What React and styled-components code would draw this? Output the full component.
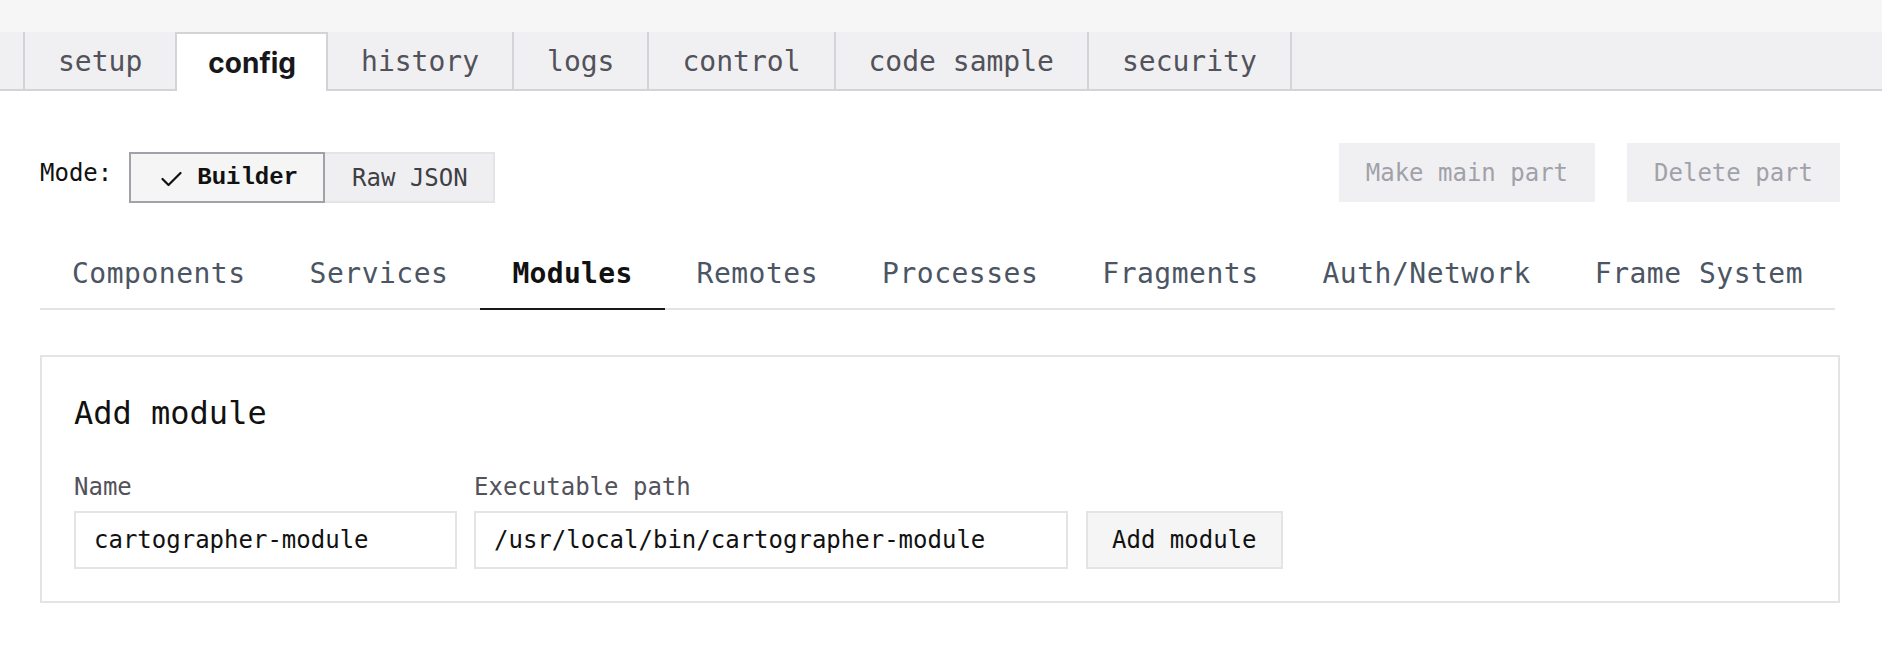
import React from "react";
import styled, { createGlobalStyle, css } from "styled-components";

const GlobalStyle = createGlobalStyle`
  html, body { margin: 0; padding: 0; background: #ffffff; }
  body { font-family: "DejaVu Sans Mono", "Liberation Mono", monospace; color: #111111; }
  * { box-sizing: border-box; }
`;

const Page = styled.div`
  width: 1882px;
  min-height: 648px;
  background: #ffffff;
`;

const TopBand = styled.div`
  height: 32px;
  background: #f6f6f6;
`;

const TabStrip = styled.div`
  display: flex;
  align-items: flex-start;
  height: 59px;
  background: #f0f0f2;
  border-bottom: 2px solid #d4d4d8;
`;

const TabStub = styled.div`
  width: 25px;
  height: 57px;
  border-right: 2px solid #d4d4d8;
`;

const TopTab = styled.div`
  height: 57px;
  padding: 3px 33px 0;
  display: flex;
  align-items: center;
  border-right: 2px solid #d4d4d8;
  font-size: 28px;
  line-height: 1;
  color: #52525b;
  white-space: nowrap;
  ${(p) =>
    p.$active &&
    css`
      height: 59px;
      margin-bottom: -2px;
      background: #ffffff;
      border-top: 2px solid #d4d4d8;
      padding: 1px 30px 0 31px;
      font-family: "Inter", "Noto Sans", sans-serif;
      font-weight: 700;
      color: #18181b;
    `}
`;

const Main = styled.div`
  padding: 52px 42px 0 40px;
`;

const ModeRow = styled.div`
  display: flex;
  justify-content: space-between;
  align-items: flex-end;
`;

const ModeGroup = styled.div`
  display: flex;
  align-items: center;
  gap: 17px;
`;

const ModeLabel = styled.span`
  font-size: 24px;
  color: #111111;
  padding-bottom: 10px;
`;

const Toggle = styled.div`
  display: flex;
`;

const ToggleButton = styled.button`
  height: 51px;
  display: flex;
  align-items: center;
  gap: 15px;
  font-family: "DejaVu Sans Mono", monospace;
  font-size: 24px;
  cursor: pointer;
  ${(p) =>
    p.$active
      ? css`
          padding: 0 25px 0 30px;
          background: #f5f5f5;
          border: 2px solid #a1a1aa;
          color: #111111;
          font-family: "Liberation Mono", monospace;
          font-weight: 700;
        `
      : css`
          padding: 0 25px 0 27px;
          background: #efeff1;
          border: 2px solid #e4e4e7;
          border-left: none;
          color: #3f3f46;
        `}
`;

const CheckMark = styled.svg`
  width: 21px;
  height: 16px;
  flex: none;
  margin-top: 2px;
`;

const Actions = styled.div`
  display: flex;
  gap: 32px;
  margin-bottom: 1px;
`;

const GhostButton = styled.button`
  height: 59px;
  padding: 0 27px;
  background: #f0f0f2;
  border: none;
  color: #a1a1aa;
  font-family: "DejaVu Sans Mono", monospace;
  font-size: 24px;
  cursor: not-allowed;
`;

const SubTabs = styled.div`
  display: flex;
  width: fit-content;
  margin-top: 39px;
  border-bottom: 2px solid #e4e4e7;
`;

const SubTab = styled.div`
  padding: 16px 32px 18px;
  line-height: 32px;
  font-size: 28px;
  letter-spacing: 0.5px;
  color: #4b5563;
  white-space: nowrap;
  border-bottom: 2px solid transparent;
  margin-bottom: -2px;
  ${(p) =>
    p.$active &&
    css`
      color: #111111;
      font-weight: 700;
      letter-spacing: 0.3px;
      border-bottom-color: #18181b;
    `}
`;

const Card = styled.div`
  margin-top: 45px;
  border: 2px solid #e4e4e7;
  padding: 32px;
`;

const CardTitle = styled.h2`
  margin: 0 0 33px;
  font-size: 32px;
  line-height: 48px;
  font-weight: 400;
  color: #111111;
`;

const FieldRow = styled.div`
  display: flex;
  align-items: flex-end;
  gap: 17px;
`;

const Field = styled.label`
  display: flex;
  flex-direction: column;
  width: ${(p) => p.$width}px;
`;

const FieldLabel = styled.span`
  font-size: 24px;
  line-height: 34px;
  color: #52525b;
  margin-bottom: 7px;
`;

const TextInput = styled.input`
  height: 58px;
  width: 100%;
  padding: 0 18px;
  border: 2px solid #e4e4e7;
  background: #ffffff;
  font-family: "DejaVu Sans Mono", monospace;
  font-size: 24px;
  color: #111111;
  outline: none;
`;

const SubmitButton = styled.button`
  height: 58px;
  padding: 0 24px;
  margin-left: 1px;
  background: #f5f5f5;
  border: 2px solid #e4e4e7;
  font-family: "DejaVu Sans Mono", monospace;
  font-size: 24px;
  color: #111111;
  cursor: pointer;
`;

const topTabs = ["setup", "config", "history", "logs", "control", "code sample", "security"];
const subTabs = [
  "Components",
  "Services",
  "Modules",
  "Remotes",
  "Processes",
  "Fragments",
  "Auth/Network",
  "Frame System",
];

export default function App() {
  return (
    <Page>
      <GlobalStyle />
      <TopBand />
      <TabStrip>
        <TabStub />
        {topTabs.map((t) => (
          <TopTab key={t} $active={t === "config"}>
            {t}
          </TopTab>
        ))}
      </TabStrip>
      <Main>
        <ModeRow>
          <ModeGroup>
            <ModeLabel>Mode:</ModeLabel>
            <Toggle>
              <ToggleButton $active>
                <CheckMark viewBox="0 0 21 16" fill="none">
                  <polyline
                    points="1.5,8 7.5,14 19.5,2"
                    stroke="#111111"
                    strokeWidth="2.2"
                    strokeLinecap="round"
                    strokeLinejoin="round"
                  />
                </CheckMark>
                Builder
              </ToggleButton>
              <ToggleButton>Raw JSON</ToggleButton>
            </Toggle>
          </ModeGroup>
          <Actions>
            <GhostButton disabled>Make main part</GhostButton>
            <GhostButton disabled>Delete part</GhostButton>
          </Actions>
        </ModeRow>
        <SubTabs>
          {subTabs.map((t) => (
            <SubTab key={t} $active={t === "Modules"}>
              {t}
            </SubTab>
          ))}
        </SubTabs>
        <Card>
          <CardTitle>Add module</CardTitle>
          <FieldRow>
            <Field $width={383}>
              <FieldLabel>Name</FieldLabel>
              <TextInput defaultValue="cartographer-module" />
            </Field>
            <Field $width={594}>
              <FieldLabel>Executable path</FieldLabel>
              <TextInput defaultValue="/usr/local/bin/cartographer-module" />
            </Field>
            <SubmitButton>Add module</SubmitButton>
          </FieldRow>
        </Card>
      </Main>
    </Page>
  );
}
